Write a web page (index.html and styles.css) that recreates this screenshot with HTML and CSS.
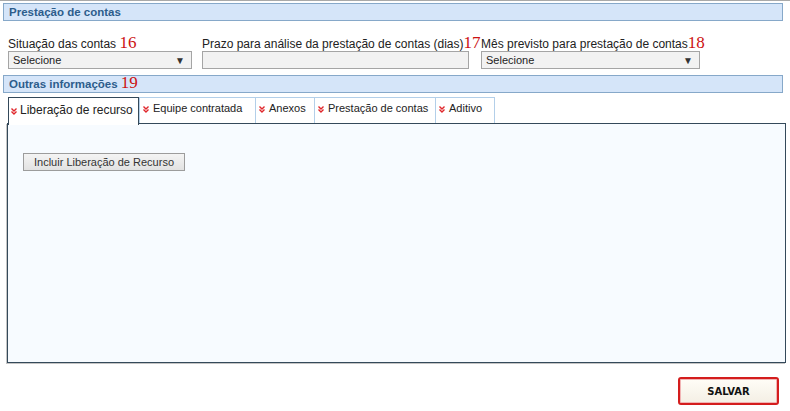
FILE: index.html
```html
<!DOCTYPE html>
<html lang="pt">
<head>
<meta charset="utf-8">
<title>Prestação de contas</title>
<link rel="stylesheet" href="styles.css">
</head>
<body>
<div class="topline"></div>
<div class="section-bar">Prestação de contas</div>
<div class="fields">
  <div class="field f1">
    <div class="label">Situação das contas <span class="num">16</span></div>
    <div class="select"><span>Selecione</span><span class="arrow">▼</span></div>
  </div>
  <div class="field f2">
    <div class="label">Prazo para análise da prestação de contas (dias)<span class="num">17</span></div>
    <div class="input"></div>
  </div>
  <div class="field f3">
    <div class="label">Mês previsto para prestação de contas<span class="num">18</span></div>
    <div class="select"><span>Selecione</span><span class="arrow">▼</span></div>
  </div>
</div>
<div class="section-bar second">Outras informações <span class="num">19</span></div>
<div class="tabs">
  <div class="tab active"><svg class="ico" viewBox="0 0 6 7" width="6" height="7"><path d="M0.5 0.5 L3 3 L5.5 0.5 M0.5 3.5 L3 6 L5.5 3.5" fill="none" stroke="#e0262b" stroke-width="1.4"/></svg>Liberação de recurso</div>
  <div class="tab t2"><svg class="ico" viewBox="0 0 6 7" width="6" height="7"><path d="M0.5 0.5 L3 3 L5.5 0.5 M0.5 3.5 L3 6 L5.5 3.5" fill="none" stroke="#e0262b" stroke-width="1.4"/></svg>Equipe contratada</div>
  <div class="tab t3"><svg class="ico" viewBox="0 0 6 7" width="6" height="7"><path d="M0.5 0.5 L3 3 L5.5 0.5 M0.5 3.5 L3 6 L5.5 3.5" fill="none" stroke="#e0262b" stroke-width="1.4"/></svg>Anexos</div>
  <div class="tab t4"><svg class="ico" viewBox="0 0 6 7" width="6" height="7"><path d="M0.5 0.5 L3 3 L5.5 0.5 M0.5 3.5 L3 6 L5.5 3.5" fill="none" stroke="#e0262b" stroke-width="1.4"/></svg>Prestação de contas</div>
  <div class="tab t5"><svg class="ico" viewBox="0 0 6 7" width="6" height="7"><path d="M0.5 0.5 L3 3 L5.5 0.5 M0.5 3.5 L3 6 L5.5 3.5" fill="none" stroke="#e0262b" stroke-width="1.4"/></svg>Aditivo</div>
</div>
<div class="panel">
  <button class="btn">Incluir Liberação de Recurso</button>
</div>
<div class="actions">
  <button class="save">SALVAR</button>
</div>
</body>
</html>
```

FILE: styles.css
```css
html, body {
  margin: 0;
  padding: 0;
  background: #ffffff;
}
body {
  font-family: "Liberation Sans", Arial, sans-serif;
  font-size: 12px;
  color: #222;
  width: 790px;
}
.topline {
  height: 1px;
  background: #a9a9a9;
}
.section-bar {
  margin: 2px 7px 0 3px;
  height: 16px;
  line-height: 16px;
  padding-left: 5px;
  background: #d5e5f9;
  border: 1px solid #86a8c9;
  color: #2d5d8c;
  font-weight: bold;
  font-size: 11.5px;
}
.section-bar .num {
  font-weight: normal;
}
.section-bar.second {
  margin-top: 6px;
}
.num {
  font-family: "Liberation Serif", "Times New Roman", serif;
  font-size: 17px;
  color: #cc1111;
  line-height: 14px;
}
.fields {
  display: flex;
  margin: 13px 0 0 8px;
}
.field {
  display: flex;
  flex-direction: column;
}
.f1 { width: 184px; margin-right: 10px; }
.f2 { width: 267px; margin-right: 12px; }
.f3 { width: 219px; }
.label {
  height: 17px;
  line-height: 20px;
  white-space: nowrap;
  color: #222;
}
.select, .input {
  height: 16px;
  border: 1px solid #a5a5a5;
  background: #f2f2f2;
  box-sizing: content-box;
}
.select {
  display: flex;
  justify-content: space-between;
  align-items: center;
  padding: 0 6px 0 4px;
  font-size: 11px;
  color: #222;
}
.arrow {
  font-size: 10px;
  color: #333;
}
.tabs {
  display: flex;
  align-items: flex-start;
  margin: 4px 0 0 8px;
  height: 26px;
  position: relative;
  z-index: 1;
}
.tab {
  border: 1px solid #b3cfe9;
  border-bottom: none;
  background: #ffffff;
  padding: 3px 0 0 3px;
  box-sizing: border-box;
  height: 26px;
  font-size: 11px;
  line-height: 14px;
  color: #222;
  white-space: nowrap;
  margin-left: -1px;
}
.tab .ico {
  margin-right: 4px;
  vertical-align: -1px;
}
.tab.active {
  margin-left: 0;
  height: 28px;
  border-color: #34495a;
  padding: 5px 0 0 2px;
  font-size: 12px;
  background: #ffffff;
  width: 131px;
}
.tab.active .ico {
  margin-right: 3px;
}
.t2 { width: 117px; margin-left: 0; }
.t3 { width: 60px; }
.t4 { width: 122px; }
.t5 { width: 60px; }
.panel {
  margin-left: 7px;
  width: 779px;
  height: 240px;
  box-sizing: border-box;
  border: 1px solid #34495a;
  background: #f7fbff;
  padding: 29px 0 0 15px;
  box-shadow: -1px 1px 0 #c4c4c4;
}
.btn {
  width: 162px;
  height: 18px;
  padding: 0;
  border: 1px solid #9c9c9c;
  background: linear-gradient(#f4f4f4, #e2e2e2);
  font-family: "Liberation Sans", Arial, sans-serif;
  font-size: 11px;
  color: #333;
  line-height: 16px;
  border-radius: 0;
}
.actions {
  display: flex;
  justify-content: flex-end;
  margin: 14px 11px 0 0;
}
.save {
  width: 101px;
  height: 28px;
  border: 2px solid #d41d1d;
  border-radius: 3px;
  background: linear-gradient(#fffdf7, #f4efe4);
  box-shadow: inset 0 0 0 1px #f1b4b4;
  font-family: "DejaVu Sans", Verdana, sans-serif;
  font-weight: bold;
  font-size: 10px;
  color: #111;
  padding: 0;
}
```
